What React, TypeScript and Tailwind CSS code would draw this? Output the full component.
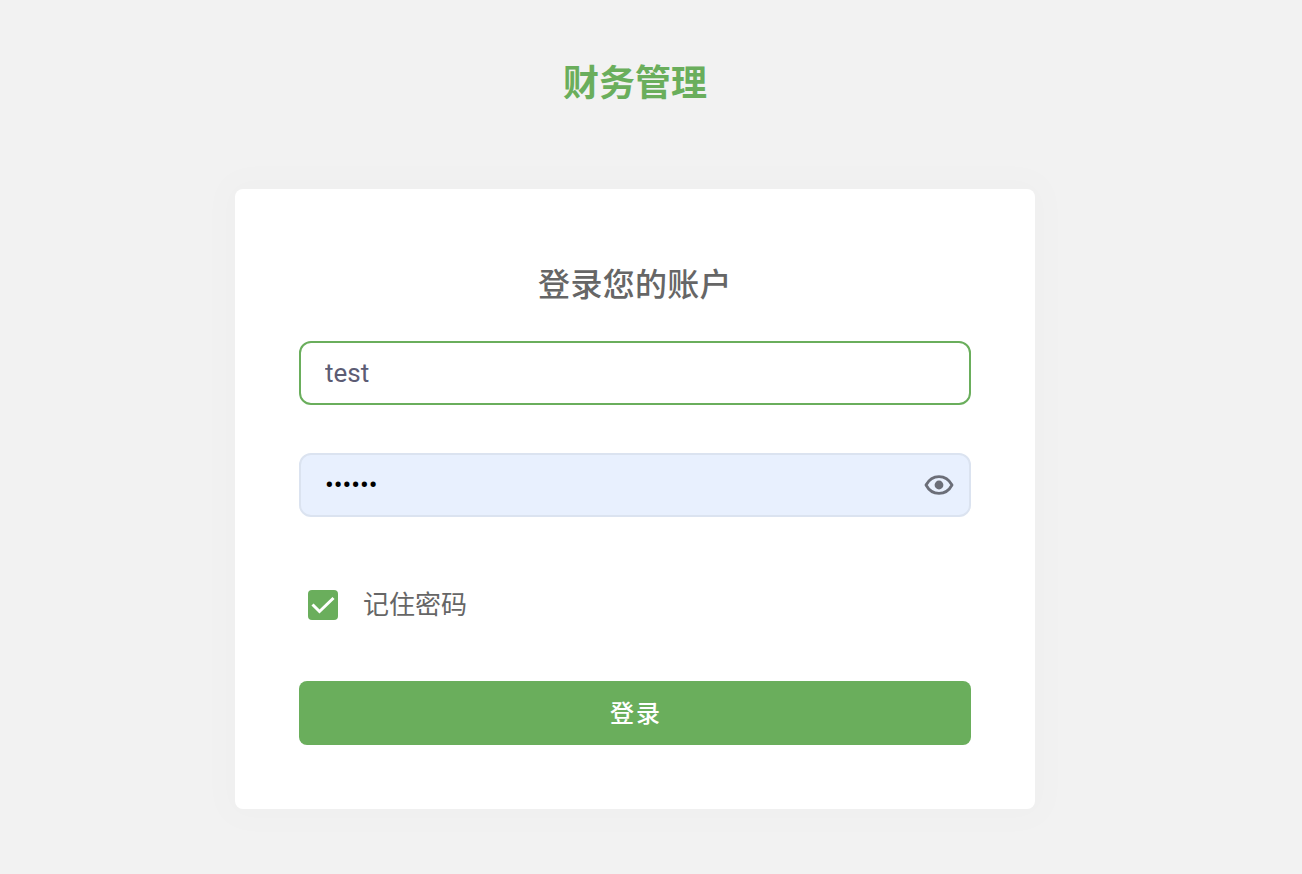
export default function App() {
  const font = { fontFamily: 'Roboto, "Noto Sans CJK SC", sans-serif' };
  return (
    <div className="min-h-[874px] bg-[#f2f2f2] overflow-hidden" style={font}>
      <div className="w-[1270px] flex flex-col items-center">
        <h1 className="mt-[58px] h-[52px] leading-[52px] text-[36px] font-bold text-[#6aae5c]">财务管理</h1>
        <div className="mt-[79px] w-[800px] h-[620px] bg-white rounded-[8px] px-[64px] pt-[72px] shadow-[0_0_32px_16px_rgba(0,0,0,0.012)]">
          <h2 className="h-[48px] leading-[48px] text-center text-[32px] font-medium tracking-[0.3px] text-[#666666]">登录您的账户</h2>
          <div className="mt-[32px] h-[64px]">
            <input
              readOnly
              value="test"
              className="w-full h-full rounded-[12px] border-2 border-[#6aae5c] bg-white pl-[24px] pr-[24px] text-[26px] text-[#5c5c74] outline-none"
            />
          </div>
          <div className="relative mt-[48px] h-[64px]">
            <input
              readOnly
              type="password"
              value="123456"
              className="w-full h-full rounded-[12px] border-2 border-[#dbe3f0] bg-[#e8f0fe] pl-[24px] pr-[60px] text-[26px] text-black outline-none"
            />
            <svg
              className="absolute right-[16px] top-[16px]"
              width="32"
              height="32"
              viewBox="0 0 32 32"
              fill="none"
            >
              <path
                d="M3 16C6 10.4 10.6 7.6 16 7.6S26 10.4 29 16C26 21.6 21.4 24.4 16 24.4S6 21.6 3 16Z"
                stroke="#6b6e78"
                strokeWidth="2.8"
                strokeLinejoin="round"
              />
              <circle cx="16" cy="16" r="4.4" fill="#6b6e78" />
            </svg>
          </div>
          <label className="mt-[64px] ml-[9px] h-[48px] flex items-center">
            <span className="w-[30px] h-[30px] rounded-[4px] bg-[#6aae5c] flex items-center justify-center">
              <svg width="30" height="30" viewBox="0 0 30 30" fill="none">
                <path d="M4.5 14.5L11.5 21.5L25.5 8" stroke="white" strokeWidth="3" />
              </svg>
            </span>
            <span className="ml-[25px] text-[26px] text-[#666666]">记住密码</span>
          </label>
          <button className="mt-[52px] w-full h-[64px] rounded-[8px] bg-[#6aae5c] pl-[2px] pt-[2px] text-white text-[24px] font-medium tracking-[2px]">
            登录
          </button>
        </div>
      </div>
    </div>
  );
}
